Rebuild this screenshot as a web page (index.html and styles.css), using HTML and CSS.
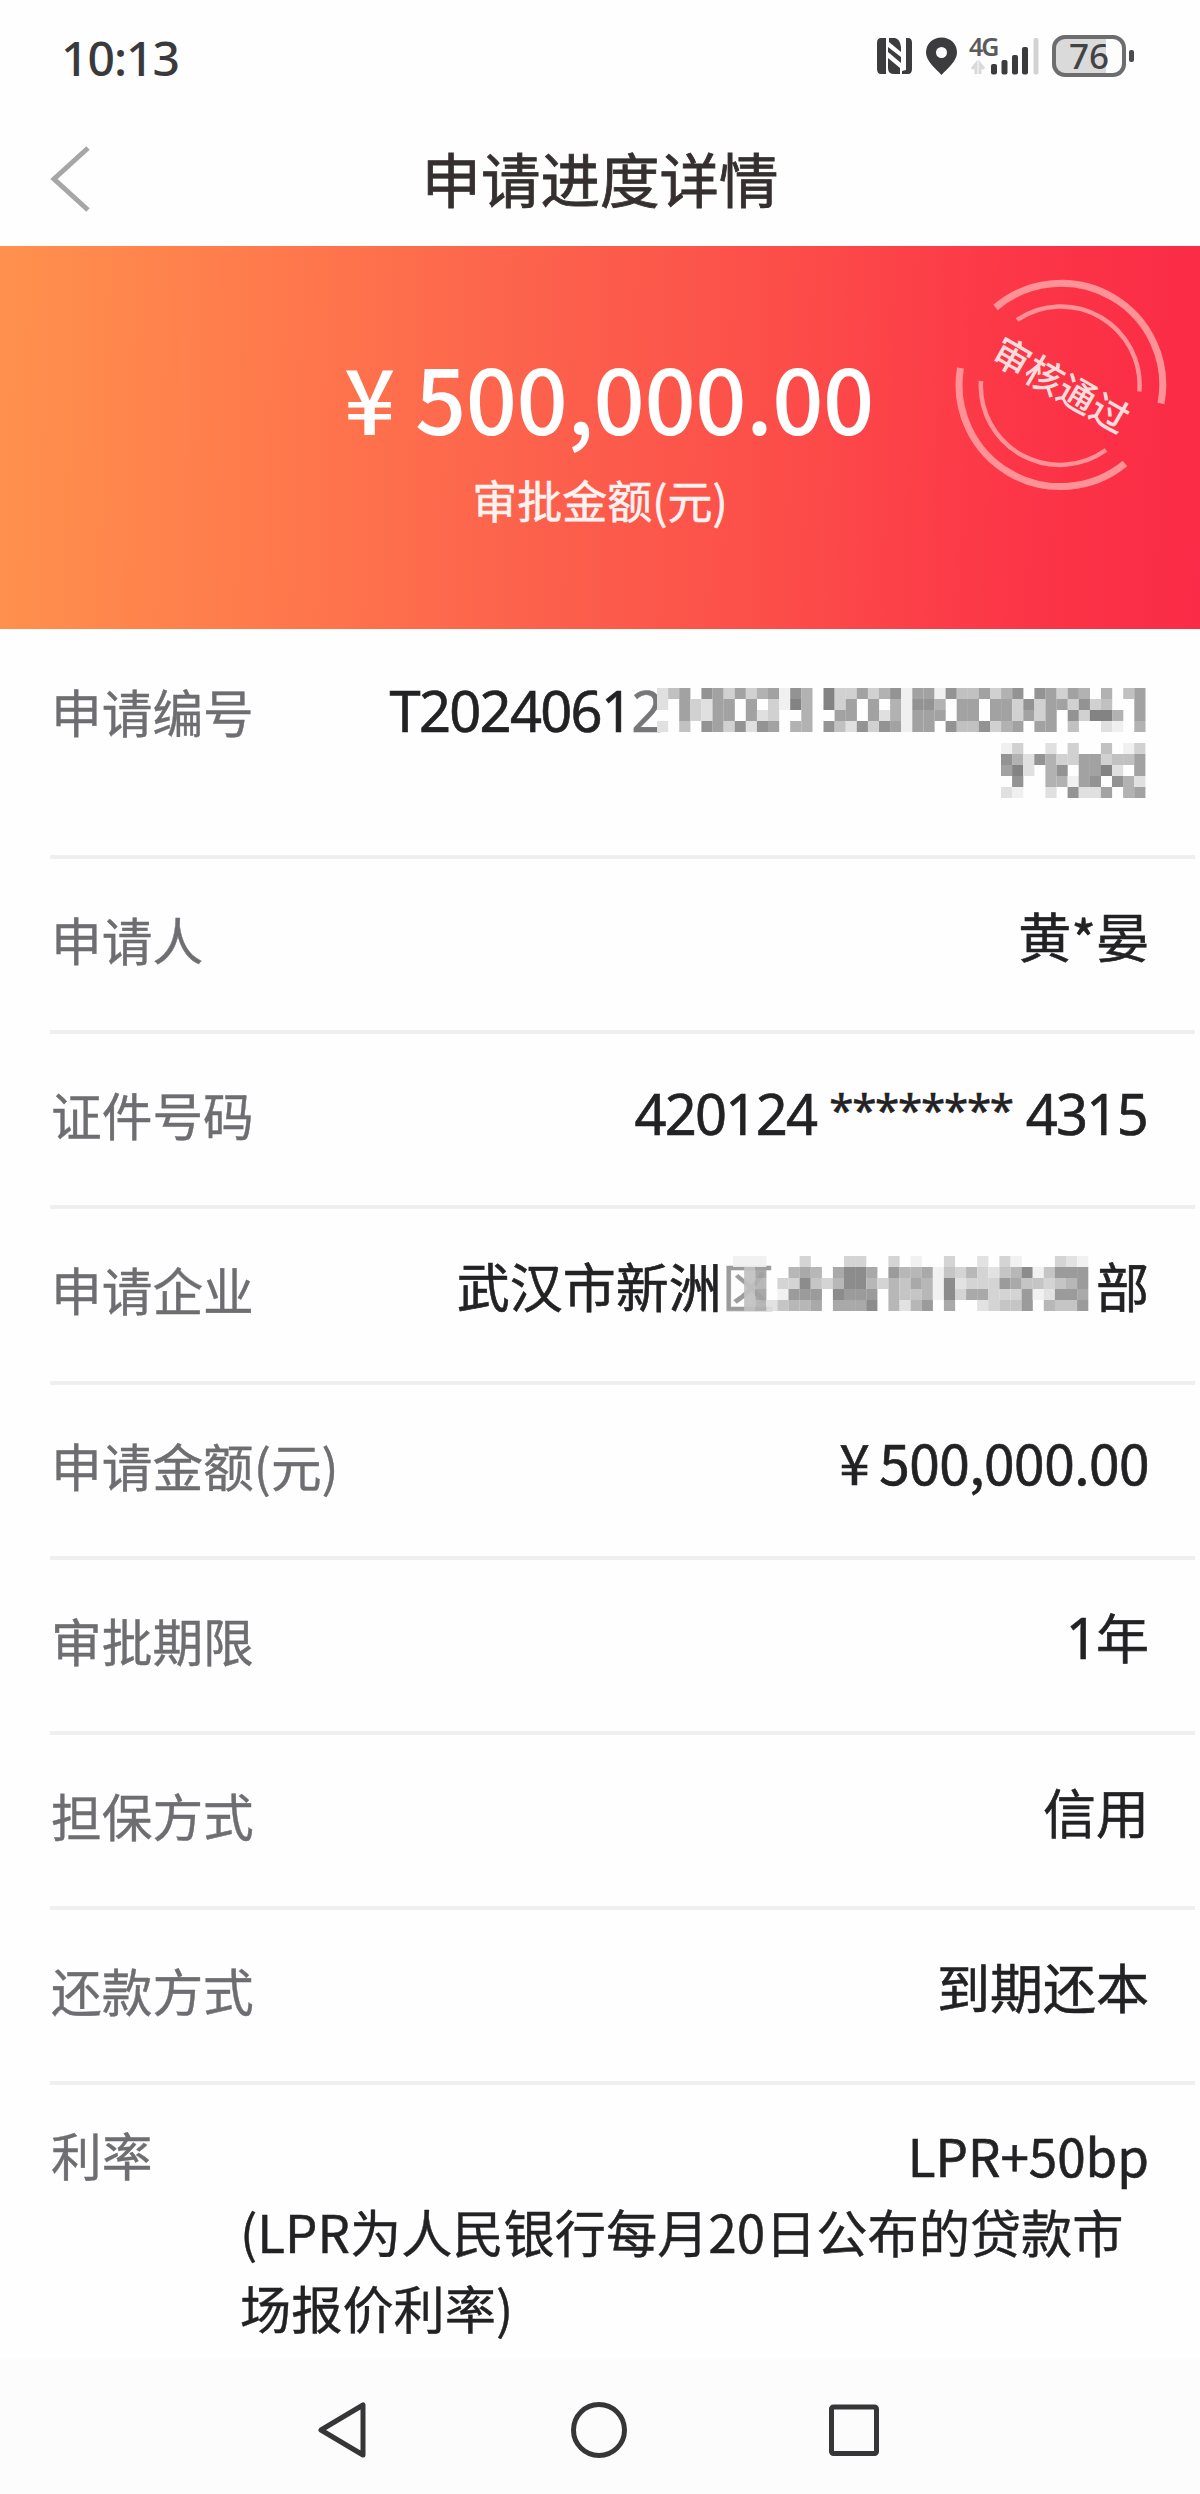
FILE: index.html
```
<!DOCTYPE html>
<html lang="zh-CN">
<head>
<meta charset="utf-8">
<title>申请进度详情</title>
<link rel="stylesheet" href="styles.css">
</head>
<body>
<div class="status">
  <span class="time">10:13</span>
  <div class="tray">
    <svg class="tray-icons" width="168" height="44" viewBox="0 0 168 44">
      <g fill="#3c3c3e">
        <path d="M5 4H10V40H5Q1 40 1 35V9Q1 4 5 4Z"/>
        <path d="M30 4H32Q36 4 36 9V35Q36 40 32 40H26V37L30 36Z"/>
        <path d="M13 4H19Q24 5 25 13V18L13 8Z"/>
        <path d="M12 13L25 23V29L12 18Z"/>
        <path d="M12 24L24 34V40H18Q12 40 12 34Z"/>
        <path fill-rule="evenodd" d="M65.500 3.500C56.500 3.500 50 10 50 18.500C50 27 59 34 65.500 41C72 34 81 27 81 18.500C81 10 74.500 3.500 65.500 3.500ZM65.500 13A5.500 5.500 0 1 1 65.500 24A5.500 5.500 0 1 1 65.500 13Z"/>
        <rect x="115" y="30" width="6" height="10.500" rx="2"/>
        <rect x="125.500" y="26" width="6" height="14.500" rx="2"/>
        <rect x="136" y="21" width="6" height="19.500" rx="2"/>
        <rect x="146" y="13" width="6" height="27.500" rx="2"/>
      </g>
      <rect x="157.500" y="4" width="5" height="36.500" rx="2" fill="#d2d2d2"/>
      <path d="M96 35L100 30V40M104 40V30L108 35" fill="none" stroke="#d9d9d9" stroke-width="3"/>
      <text x="93" y="22" class="net">4G</text>
    </svg>
    <div class="battery"><span>76</span></div>
  </div>
</div>
<header class="header">
  <svg class="back" width="44" height="70" viewBox="0 0 44 70"><path d="M40 4L6 35L40 66" fill="none" stroke="#a6a6a6" stroke-width="5"/></svg>
  <h1>申请进度详情</h1>
</header>
<section class="banner">
  <div class="amount"><span class="yen">¥</span>500,000.00</div>
  <div class="caption">审批金额(元)</div>
  <svg class="stamp" width="220" height="220" viewBox="-110 -110 220 220">
    <g fill="none" stroke="#ff9296">
      <path stroke-width="7" d="M-65.500 -77.500A101.500 101.500 0 0 1 100 18.500M-100.500 -17A101.500 101.500 0 0 0 64 78.500"/>
      <path stroke-width="4.500" d="M-44 -65A78.500 78.500 0 0 1 78.300 6.500M-80 -4A79 79 0 0 0 45 65"/>
    </g>
    <text class="stamp-text" transform="rotate(30)" x="0" y="14">审核通过</text>
  </svg>
</section>
<main class="list">
  <div class="row first"><span class="label">申请编号</span>
    <div class="value serial">
      <div class="serial-line"><span class="num">T2024061<span class="faded">2</span></span><svg class="mosaic" data-cells="long"></svg></div>
      <svg class="mosaic second" data-cells="short"></svg>
    </div>
  </div>
  <div class="row"><span class="label">申请人</span><span class="value">黄<span class="star">*</span>晏</span></div>
  <div class="row"><span class="label">证件号码</span><span class="value num id">420124 <span class="stars">********</span> 4315</span></div>
  <div class="row"><span class="label">申请企业</span><span class="value company">武汉市新洲<span class="dim">区</span><svg class="mosaic over" data-cells="company"></svg>部</span></div>
  <div class="row"><span class="label">申请金额(元)</span><span class="value money"><span class="yen">¥</span>500,000.00</span></div>
  <div class="row"><span class="label">审批期限</span><span class="value"><span class="num">1</span>年</span></div>
  <div class="row"><span class="label">担保方式</span><span class="value">信用</span></div>
  <div class="row"><span class="label">还款方式</span><span class="value">到期还本</span></div>
  <div class="row rate"><span class="label">利率</span><span class="value">LPR+50bp</span>
    <p class="note">(LPR为人民银行每月20日公布的贷款市<br>场报价利率)</p>
  </div>
</main>
<nav class="nav">
  <svg width="60" height="64" viewBox="0 0 60 64"><path d="M49 7V57L7 32Z" stroke-linejoin="round"/></svg>
  <svg width="60" height="64" viewBox="0 0 60 64"><circle cx="30" cy="32" r="25.500"/></svg>
  <svg width="60" height="64" viewBox="0 0 60 64"><rect x="7.500" y="9" width="45" height="46.500" rx="2"/></svg>
</nav>
<script src="mosaic.js"></script>
</body>
</html>
```
FILE: styles.css
```
* { box-sizing: border-box; margin: 0; padding: 0; }
body {
  width: 1200px;
  height: 2494px;
  overflow: hidden;
  display: flex;
  flex-direction: column;
  background: #fefefe;
  color: #222224;
  font-family: "Noto Sans CJK SC", sans-serif;
}
svg { display: block; flex: none; overflow: visible; }

.status {
  flex: none;
  height: 112px;
  display: flex;
  justify-content: space-between;
  align-items: center;
  padding: 0 66px 0 61px;
}
.time {
  font: 500 48px/66px "Noto Sans", sans-serif;
  letter-spacing: -1px;
  color: #3a3a3c;
  padding-top: 3px;
}
.tray { display: flex; align-items: center; gap: 8px; }
.net { font: 600 25px "Noto Sans", sans-serif; letter-spacing: -2px; fill: #5b5b5d; }
.battery {
  position: relative;
  width: 74px;
  height: 42px;
  margin-right: 8px;
  border: 4px solid #6d6d6f;
  border-radius: 13px;
  background: linear-gradient(90deg, #dadada 76%, #fdfdfd 76%);
  text-align: center;
  font: 500 35px/34px "Noto Sans", sans-serif;
  color: #434345;
}
.battery::after {
  content: "";
  position: absolute;
  right: -12px;
  top: 11px;
  width: 5px;
  height: 12px;
  border-radius: 2px;
  background: #4c4c4e;
}

.header {
  flex: none;
  height: 134px;
  display: grid;
  grid-template-columns: 100px 1fr 100px;
  align-items: center;
}
.back { margin-left: 48px; }
.header h1 {
  font-size: 59.500px;
  line-height: 80px;
  font-weight: 400;
  text-align: center;
  color: #35302f;
  -webkit-text-stroke: 0.800px #35302f;
  padding-bottom: 5px;
}

.banner {
  flex: none;
  position: relative;
  height: 383px;
  padding-top: 95px;
  background: linear-gradient(92deg, #ff914d 0%, #ff7a4c 22%, #fc614c 45%, #fc4c49 66%, #fc3547 85%, #fa2b46 100%);
  color: #fff;
  text-align: center;
}
.amount {
  font-size: 90px;
  line-height: 110px;
  font-weight: 500;
  letter-spacing: -0.500px;
  padding-left: 18px;
}
.banner .yen { margin-right: 20px; }
.caption { font-size: 45px; line-height: 60px; padding-top: 19px; opacity: .92; -webkit-text-stroke: 0.600px #fff; }
.stamp { position: absolute; left: 951px; top: 29px; }
.stamp-text { font-size: 37.500px; font-weight: 500; fill: #ffdcdc; text-anchor: middle; }

.list { margin-left: 50px; margin-right: 5px; flex: none; }
.row {
  display: flex;
  justify-content: space-between;
  height: 175.200px;
  padding: 44px 46px 0 1px;
  border-bottom: 4px solid #efefef;
  line-height: 72px;
}
.row.first { height: 230px; padding-top: 46px; }
.label { font-size: 50.700px; color: #6e6e72; -webkit-text-stroke: 0.400px #6e6e72; }
.value { font-size: 53px; margin-top: -4px; -webkit-text-stroke: 0.600px currentColor; }
.num { font-family: "Noto Sans", "Noto Sans CJK SC", sans-serif; font-size: 56px; letter-spacing: -1.700px; }
.id { margin-top: -1px; margin-right: 2px; }
.first .serial { display: flex; flex-direction: column; align-items: flex-end; margin-top: -1px; }
.serial-line { display: flex; align-items: center; }
.serial .mosaic { margin-right: 4px; }
.serial-line .mosaic { margin-left: -5px; }
.serial .second { margin-top: -3px; }
.faded { color: #77777a; }
.star { font-size: 53px; position: relative; top: 2px; }
.stars { font-size: 44px; letter-spacing: -1.300px; position: relative; top: -9px; }
.dim { color: #9c9c9c; }
.company { display: flex; align-items: center; align-self: flex-start; }
.company .mosaic { margin: -4px 8px 0 -42px; opacity: .92; }
.money { font-size: 55px; letter-spacing: -0.500px; }
.money .yen { margin-right: 10px; }

.row.rate {
  height: 272.600px;
  flex-wrap: wrap;
  align-content: flex-start;
  padding-top: 33px;
  line-height: 76px;
  border: 0;
}
.rate .label { margin-top: -2px; }
.rate .value { font-size: 51.200px; margin-top: -1px; }
.note { width: 100%; padding-left: 189px; font-size: 51.200px; white-space: nowrap; -webkit-text-stroke: 0.400px currentColor; }

.nav {
  flex: none;
  height: 136px;
  display: flex;
  justify-content: center;
  gap: 195px;
  padding: 40px 2px 0 0;
  background: #fcfcfc;
}
.nav svg { fill: none; stroke: #363638; stroke-width: 5; }
```
FILE: mosaic.js
```
// Censoring blocks: each digit is the darkness of one cell.
const patterns = {
  long: [
    "24607636356175083363571661744635707636505046",
    "20632660603185083606051775066066373663734006",
    "00632660623005006606251666066066363607388506",
    "20407637276055074273761660744735606604002105"
  ],
  short: [
    "1300203004013",
    "7527533663446",
    "6820570668206",
    "0700551670752",
    "2100207226056"
  ],
  company: [
    "11100030003300301003002031000321",
    "04600565068860755614353245814777",
    "04503384358853546518233376443457",
    "04601777087770544518366333712776",
    "04524556066680525706002344705447"
  ]
};
const cell = 11.1;
const ns = "http://www.w3.org/2000/svg";
document.querySelectorAll(".mosaic").forEach((svg) => {
  const rows = patterns[svg.dataset.cells];
  svg.setAttribute("width", rows[0].length * cell);
  svg.setAttribute("height", rows.length * 11);
  rows.forEach((row, y) => [...row].forEach((level, x) => {
    if (level === "0") return;
    const rect = document.createElementNS(ns, "rect");
    const gray = 255 - Number(level) * 15.5;
    rect.setAttribute("x", x * cell);
    rect.setAttribute("y", y * 11);
    rect.setAttribute("width", cell + 0.1);
    rect.setAttribute("height", 11);
    rect.setAttribute("fill", `rgb(${gray},${gray},${gray})`);
    svg.append(rect);
  }));
});
```
